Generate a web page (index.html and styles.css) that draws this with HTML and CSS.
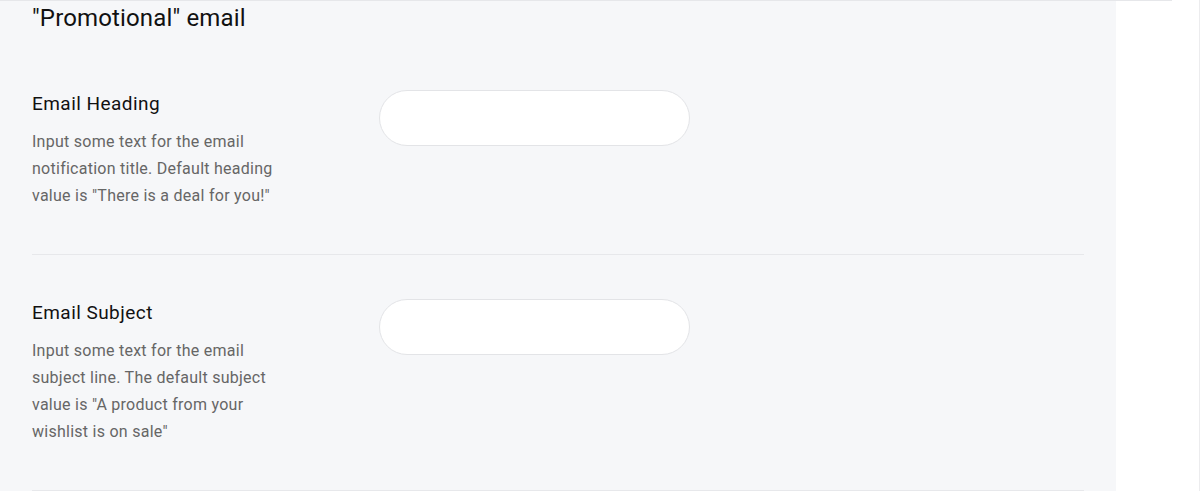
FILE: index.html
```html
<!DOCTYPE html>
<html>
<head>
  <meta charset="UTF-8">
  <title>Promotional email</title>
  <link rel="stylesheet" href="styles.css">
</head>
<body>
  <div class="page">
    <div class="frame">
      <div class="panel">
        <h2 class="section-title">"Promotional" email</h2>

        <div class="setting-row">
          <div class="setting-info">
            <h3 class="setting-label">Email Heading</h3>
            <p class="setting-desc">Input some text for the email notification title. Default heading value is "There is a deal for you!"</p>
          </div>
          <div class="setting-control">
            <input type="text" class="text-input" id="email-heading"/>
          </div>
        </div>

        <div class="setting-row">
          <div class="setting-info">
            <h3 class="setting-label">Email Subject</h3>
            <p class="setting-desc">Input some text for the email subject line. The default subject value is "A product from your wishlist is on sale"</p>
          </div>
          <div class="setting-control">
            <input type="text" class="text-input" id="email-subject"/>
          </div>
        </div>
      </div>
    </div>
  </div>
</body>
</html>
```

FILE: styles.css
```css
body {
  margin: 0;
  background-color: #ffffff;
  font-family: Roboto, "Liberation Sans", Arial, sans-serif;
}

.page {
  width: 1199px;
  height: 491px;
  border-right: 1px solid #ececee;
  overflow: hidden;
}

.frame {
  width: 1172px;
  border-top: 1px solid #e6e7ea;
}

.panel {
  width: 1116px;
  min-height: 490px;
  background-color: #f6f7f9;
  padding: 3px 32px 0 32px;
  box-sizing: border-box;
}

.section-title {
  margin: 0 0 13px 0;
  font-size: 24px;
  font-weight: 400;
  line-height: 29px;
  letter-spacing: 0.15px;
  color: #111111;
}

.setting-row {
  display: flex;
  align-items: flex-start;
  width: 1052px;
  padding: 44px 0 45px 0;
  border-bottom: 1px solid #e7e8eb;
}

.setting-info {
  width: 256px;
  margin-right: 91px;
}

.setting-label {
  margin: 0;
  font-size: 19px;
  font-weight: 400;
  line-height: 27px;
  letter-spacing: 0.45px;
  color: #111111;
}

.setting-desc {
  margin: 11px 0 0 0;
  font-size: 16px;
  line-height: 27px;
  letter-spacing: 0.26px;
  color: #666666;
}

.text-input {
  width: 311px;
  height: 56px;
  box-sizing: border-box;
  border: 1px solid #e3e4e7;
  border-radius: 28px;
  background-color: #ffffff;
  padding: 0 20px;
  font-size: 16px;
  outline: none;
}
```
